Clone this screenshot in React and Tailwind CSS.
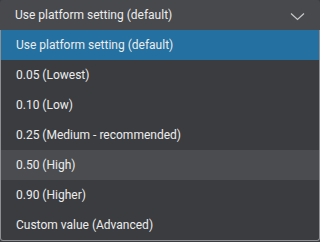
const options = [
  "Use platform setting (default)",
  "0.05 (Lowest)",
  "0.10 (Low)",
  "0.25 (Medium - recommended)",
  "0.50 (High)",
  "0.90 (Higher)",
  "Custom value (Advanced)",
];

export default function App() {
  return (
    <div className="w-[320px] h-[242px] bg-[#3b3c40] font-['Roboto',sans-serif] text-[12px] text-[#ececec] overflow-hidden">
      <div className="h-[30px] bg-[#47494d] flex items-center justify-between pl-[15px] pr-[15px] rounded-t-[3px]">
        <span>{options[0]}</span>
        <svg width="15" height="9" viewBox="0 0 15 9" fill="none" className="mt-[3px]">
          <path d="M1 1.5 L7.5 7.5 L14 1.5" stroke="#c8c8c8" strokeWidth="1.2" />
        </svg>
      </div>
      <div className="border border-t-0 border-[#8d8f93] rounded-b-[3px] bg-[#3b3c40] overflow-hidden">
        {options.map((o, i) => (
          <div
            key={o}
            className={
              "h-[30px] flex items-center pl-[15px] " +
              (i === 0 ? "bg-[#2370a1]" : i === 4 ? "bg-[#4a4c50]" : "")
            }
          >
            {o}
          </div>
        ))}
      </div>
    </div>
  );
}
